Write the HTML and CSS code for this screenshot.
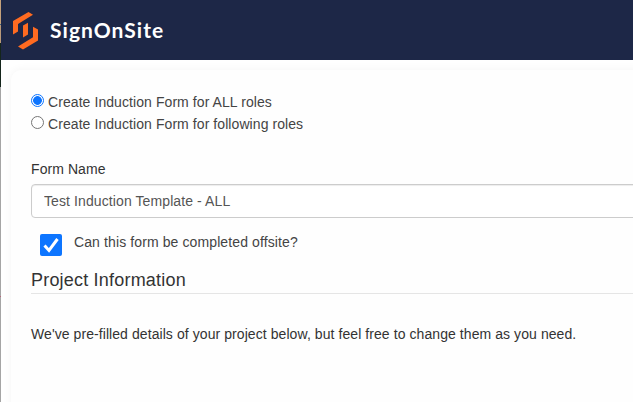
FILE: index.html
```html
<!DOCTYPE html>
<html lang="en">
<head>
    <meta charset="UTF-8">
    <meta name="viewport" content="width=device-width, initial-scale=1.0">
    <title>SignOnSite</title>
    <link rel="stylesheet" href="styles.css">
</head>
<body>
    <div class="page">
        <header class="navbar">
            <svg class="logo" width="26" height="38" viewBox="0 0 26 38" aria-hidden="true">
                <path d="M15.5 0L20 2.7L5 11.9V19.5L0 22.5V9Z"/>
                <path d="M10 13.5L15 10.8V22.5L10 25.5Z"/>
                <path d="M20 14.8L25 17.5V28.5L10 37.5L5 34.6L20 25.3Z"/>
            </svg>
            <span class="brand">SignOnSite</span>
        </header>
        <main class="card">
            <form>
                <div class="roles">
                    <label class="radio">
                        <input type="radio" name="roles" value="all" checked>
                        <span>Create Induction Form for ALL roles</span>
                    </label>
                    <label class="radio">
                        <input type="radio" name="roles" value="some">
                        <span>Create Induction Form for following roles</span>
                    </label>
                </div>
                <label class="field-label" for="form_name">Form Name</label>
                <input class="form-control" type="text" id="form_name" name="form_name" value="Test Induction Template - ALL">
                <label class="checkbox">
                    <input type="checkbox" name="offsite" checked>
                    <span>Can this form be completed offsite?</span>
                </label>
                <h2>Project Information</h2>
                <p>We've pre-filled details of your project below, but feel free to change them as you need.</p>
            </form>
        </main>
    </div>
</body>
</html>
```
FILE: styles.css
```css
* {
    box-sizing: border-box;
}
body {
    margin: 0;
    font-family: "Liberation Sans", Arial, sans-serif;
    font-size: 14px;
    line-height: 20px;
    letter-spacing: 0.075px;
    color: #333;
    overflow: hidden;
    background: linear-gradient(#c5a27b 0 24px, #3c6280 24px 25px, #b99a7a 25px 43px, #14251b 43px 87px, #a5a5a5 87px 296px, #b5667a 296px 297px, #a5a5a5 297px) no-repeat;
}
.page {
    height: 402px;
    margin-left: 1px;
    background-color: #fff;
    overflow: hidden;
}
.navbar {
    display: flex;
    align-items: center;
    height: 60px;
    padding: 1px 0 0 12px;
    background-color: #1d2747;
}
.logo {
    fill: #ff6b21;
}
.brand {
    margin: -2px 0 0 11px;
    font-family: Lato, sans-serif;
    font-size: 21px;
    font-weight: bold;
    line-height: 28px;
    letter-spacing: 1.05px;
    color: #fff;
}
.card {
    width: 700px;
    height: 400px;
    margin: 10px 0 0 10px;
    padding: 21px 20px;
    border-radius: 10px;
    background-color: #fefefe;
    box-shadow: 0 0 10px rgba(0, 0, 0, 0.05);
}
.radio {
    display: flex;
    align-items: center;
    height: 22px;
    color: #444;
}
.radio input {
    appearance: none;
    width: 13px;
    height: 13px;
    margin: -3px 4px 0 0;
    border: 1px solid #767676;
    border-radius: 50%;
    background-color: #fff;
}
.radio input:checked {
    border-color: #0d75ff;
    background: radial-gradient(circle, #0d75ff 4px, #fff 4.7px);
}
.field-label {
    display: block;
    margin-top: 24px;
}
.form-control {
    display: block;
    width: 100%;
    height: 34px;
    margin-top: 5px;
    padding: 6px 12px;
    border: 1px solid #ccc;
    border-radius: 4px;
    font: inherit;
    letter-spacing: 0.1px;
    color: #555;
    background-color: #fff;
    box-shadow: inset 0 1px 1px rgba(0, 0, 0, 0.075);
}
.checkbox {
    display: flex;
    margin: 14px 0 0 9px;
    letter-spacing: 0.11px;
    color: #444;
}
.checkbox input {
    appearance: none;
    width: 22px;
    height: 22px;
    margin: 2px 12px 0 0;
    border-radius: 2px;
    background: #0d75ff url("data:image/svg+xml,%3Csvg xmlns='http://www.w3.org/2000/svg' viewBox='0 0 22 22'%3E%3Cpath d='M4.5 11.5L9 16.5L17.5 5' fill='none' stroke='white' stroke-width='3'/%3E%3C/svg%3E") no-repeat;
}
h2 {
    margin: 13px 0 0;
    padding-bottom: 2px;
    border-bottom: 1px solid #e5e5e5;
    font-size: 18px;
    font-weight: normal;
    line-height: 22px;
    letter-spacing: 0.2px;
}
p {
    margin: 30px 0 0;
}
```
